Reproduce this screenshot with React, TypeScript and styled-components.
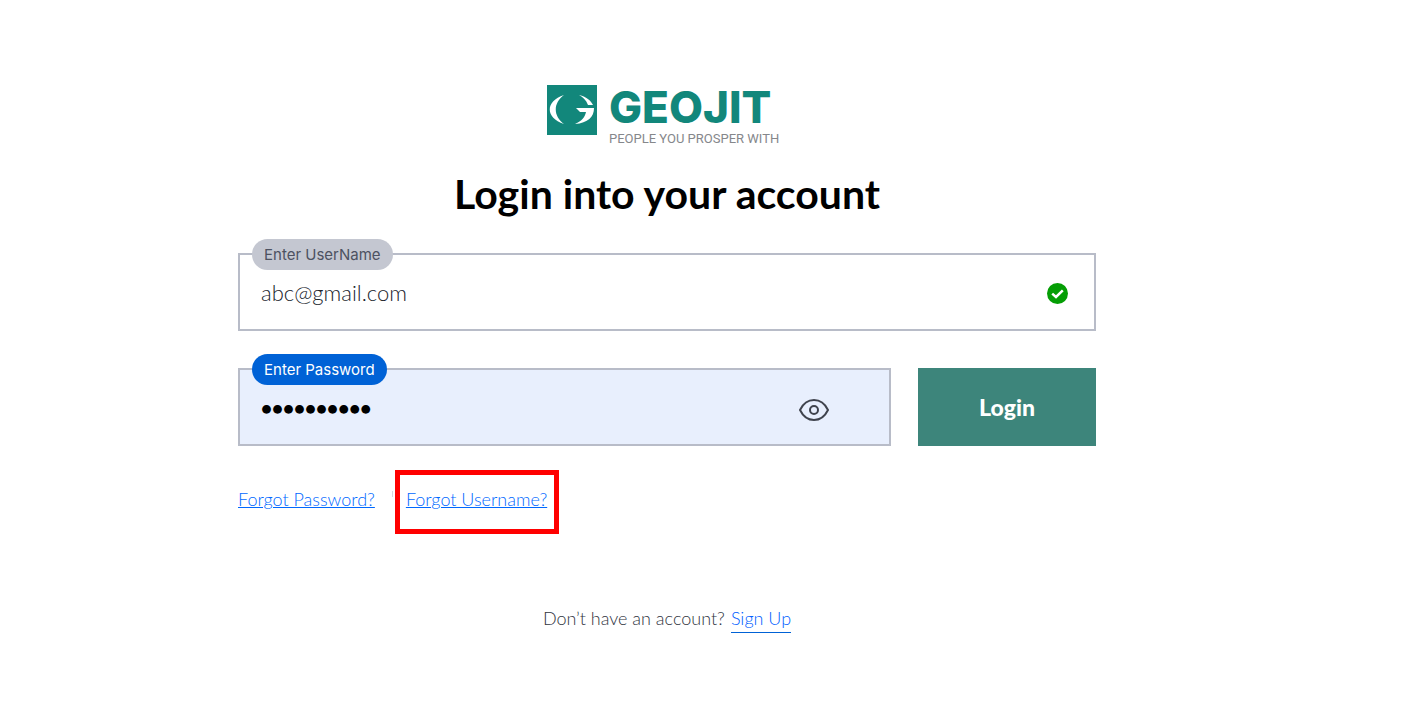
import React, { useState } from "react";
import styled, { createGlobalStyle } from "styled-components";

const GlobalStyle = createGlobalStyle`
  *, *::before, *::after { box-sizing: border-box; }
  body {
    margin: 0;
    background: #fff;
    font-family: Lato, "Open Sans", sans-serif;
    color: #30343e;
  }
`;

const Page = styled.main`
  display: flex;
  justify-content: center;
  padding: 84px 83px 64px 0;
`;

const Panel = styled.section`
  width: 100%;
  max-width: 858px;
  display: flex;
  flex-direction: column;
`;

const Brand = styled.div`
  align-self: center;
  display: flex;
  gap: 12px;
  height: 64px;
`;

const BrandText = styled.div`
  display: flex;
  flex-direction: column;
  min-width: 178px;
`;

const BrandName = styled.span`
  font: 800 44px/46px Inter, sans-serif;
  color: #12877b;
`;

const Tagline = styled.span`
  font: 400 13px/18px Roboto, sans-serif;
  color: #85878b;
`;

const Title = styled.h1`
  margin: 22px 0 0;
  font-size: 41px;
  line-height: 48px;
  font-weight: 700;
  text-align: center;
  color: #000;
`;

const Form = styled.form`
  display: flex;
  flex-direction: column;
  gap: 37px;
  margin-top: 35px;
`;

const Row = styled.div`
  display: flex;
  gap: 27px;
`;

const Field = styled.div`
  position: relative;
  flex: 1;
`;

const Label = styled.label<{ $active?: boolean }>`
  position: absolute;
  top: -14px;
  left: 14px;
  padding: 0 12px;
  border-radius: 16px;
  font: 400 15px/31px Inter, sans-serif;
  background: ${(p) => (p.$active ? "#0062d6" : "#c4c7d1")};
  color: ${(p) => (p.$active ? "#fff" : "#4d5261")};
`;

const Input = styled.input<{ $filled?: boolean }>`
  display: block;
  width: 100%;
  height: 78px;
  padding: 0 72px 0 21px;
  border: 2px solid #b8bcc8;
  border-radius: 0;
  outline: none;
  font: ${(p) => (p.$filled ? 900 : 300)} ${(p) => (p.$filled ? 19 : 22)}px/24px Lato, sans-serif;
  background: ${(p) => (p.$filled ? "#e8effd" : "#fff")};
  color: ${(p) => (p.$filled ? "#000" : "#20242c")};
`;

const ValidMark = styled.svg`
  position: absolute;
  top: 30px;
  right: 28px;
`;

const Reveal = styled.button`
  position: absolute;
  top: 28px;
  right: 61px;
  display: flex;
  padding: 0;
  border: 0;
  background: none;
  cursor: pointer;
`;

const LoginButton = styled.button`
  width: 178px;
  border: 0;
  background: #3d857b;
  color: #fff;
  font: 900 23px/28px Lato, sans-serif;
  cursor: pointer;
`;

const Links = styled.nav`
  display: flex;
  align-items: center;
  margin-top: 41px;
  font-size: 18px;
  font-weight: 300;
  line-height: 24px;
`;

const TextLink = styled.a`
  color: #0068ff;
  text-decoration: underline;
  text-decoration-thickness: 1px;
  text-underline-offset: 1px;
`;

const Separator = styled.span`
  width: 1px;
  height: 6px;
  margin: 0 13px 10px 17px;
  background: #d5d8e0;
`;

const Highlight = styled.span`
  position: relative;

  &::after {
    content: "";
    position: absolute;
    inset: -17px -12px -23px -11px;
    border: 5px solid #f00;
    pointer-events: none;
  }
`;

const SignUp = styled.p`
  display: flex;
  justify-content: center;
  gap: 6px;
  margin: 94px 0 0;
  font-size: 18px;
  font-weight: 300;
  line-height: 26px;
`;

const SignUpLink = styled.a`
  padding-bottom: 1px;
  color: #0060ff;
  text-decoration: none;
  border-bottom: 1px solid #0062d6;
`;

function BrandMark() {
  return (
    <svg width="50" height="51" viewBox="0 0 50 51" aria-hidden="true">
      <rect y="1" width="50" height="50" fill="#12877b" />
      <path d="M17 11 C-2 17 -2 34 17 40 C6 32 6 19 17 11Z" fill="#fff" />
      <path d="M32 11 C40 13 44 17 46 21 H41 C39 16 36 13 32 11Z" fill="#fff" />
      <path d="M29 24 H47 C47 33 41 39 28 40 C35 37 38 33 39 28 H33Z" fill="#fff" />
    </svg>
  );
}

export default function App() {
  const [user, setUser] = useState("abc@gmail.com");
  const [password, setPassword] = useState("secret1234");
  const [visible, setVisible] = useState(false);

  return (
    <>
      <GlobalStyle />
      <Page>
        <Panel>
          <Brand>
            <BrandMark />
            <BrandText>
              <BrandName>GEOJIT</BrandName>
              <Tagline>PEOPLE YOU PROSPER WITH</Tagline>
            </BrandText>
          </Brand>
          <Title>Login into your account</Title>
          <Form onSubmit={(e) => e.preventDefault()}>
            <Field>
              <Input id="username" value={user} onChange={(e) => setUser(e.target.value)} />
              <Label htmlFor="username">Enter UserName</Label>
              <ValidMark width="21" height="21" viewBox="0 0 21 21" aria-hidden="true">
                <circle cx="10.5" cy="10.5" r="10.5" fill="#059e05" />
                <path d="M5.2 10.6 L9 14 L15.8 7.4" fill="none" stroke="#fff" strokeWidth="2.5" />
              </ValidMark>
            </Field>
            <Row>
              <Field>
                <Input
                  id="password"
                  type={visible ? "text" : "password"}
                  $filled
                  value={password}
                  onChange={(e) => setPassword(e.target.value)}
                />
                <Label htmlFor="password" $active>Enter Password</Label>
                <Reveal type="button" aria-label="Show password" onClick={() => setVisible(!visible)}>
                  <svg width="32" height="28" viewBox="0 0 32 28" fill="none" stroke="#3f434d" strokeWidth="2">
                    <path d="M2 14 C8.5 .7 23.5 .7 30 14 C23.5 27.3 8.5 27.3 2 14Z" strokeLinejoin="round" />
                    <circle cx="16" cy="14" r="4" />
                  </svg>
                </Reveal>
              </Field>
              <LoginButton type="submit">Login</LoginButton>
            </Row>
          </Form>
          <Links>
            <TextLink href="#forgot-password">Forgot Password?</TextLink>
            <Separator />
            <Highlight>
              <TextLink href="#forgot-username">Forgot Username?</TextLink>
            </Highlight>
          </Links>
          <SignUp>
            Don’t have an account?
            <SignUpLink href="#sign-up">Sign Up</SignUpLink>
          </SignUp>
        </Panel>
      </Page>
    </>
  );
}
